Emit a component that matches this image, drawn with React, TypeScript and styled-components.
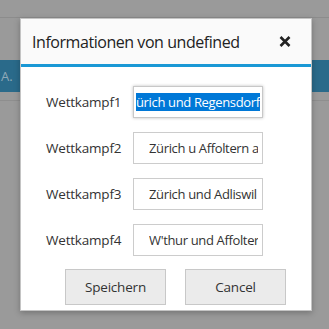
import React from 'react';
import styled, { createGlobalStyle } from 'styled-components';

const GlobalStyle = createGlobalStyle`
  html, body { margin: 0; padding: 0; }
  body {
    width: 329px;
    height: 329px;
    overflow: hidden;
    background: #999999;
    font-family: 'Open Sans', 'Noto Sans', sans-serif;
  }
`;

// Page behind the overlay (already dimmed)
const Page = styled.div`
  position: relative;
  width: 329px;
  height: 329px;
  background: #9a9a9a;
`;

const TopBar = styled.div`
  height: 17px;
  border-bottom: 1px solid #8c8c8c;
`;

const Band = styled.div`
  margin-top: 42px;
  height: 32px;
  background: #2a6a8a;
  color: #8fa9b8;
  font-size: 13px;
  line-height: 32px;
  padding-left: 1px;
`;

const Rule = styled.div`
  margin-top: 8px;
  height: 1px;
  background: #8e8e8e;
`;

const Dialog = styled.div`
  position: absolute;
  left: 20px;
  top: 18px;
  width: 292px;
  height: 293px;
  box-sizing: border-box;
  background: #ffffff;
  border: 1px solid #c4c4c4;
  box-shadow: 0 2px 6px rgba(0, 0, 0, 0.25);
  display: flex;
  flex-direction: column;
`;

const Header = styled.div`
  height: 45px;
  background: #fafafa;
  border-bottom: 3px solid #1a98d5;
  display: flex;
  align-items: center;
  justify-content: space-between;
  padding: 0 20px 0 11px;
`;

const Title = styled.h1`
  margin: 0;
  font-size: 16px;
  letter-spacing: -0.45px;
  font-weight: 400;
  color: #222;
`;

const Close = styled.button`
  border: 0;
  background: none;
  padding: 0;
  display: flex;
  cursor: pointer;
`;

const Body = styled.div`
  padding: 19px 0 0 25px;
  display: flex;
  flex-direction: column;
  gap: 14px;
`;

const Row = styled.div`
  display: flex;
  align-items: center;
  gap: 14px;
`;

const Label = styled.label`
  width: 73px;
  font-size: 13.5px;
  letter-spacing: -0.2px;
  color: #333;
  white-space: nowrap;
`;

const fieldBase = `
  box-sizing: border-box;
  width: 130px;
  height: 32px;
  border: 1px solid #cccccc;
  background: #fff;
  font-family: 'Open Sans', 'Noto Sans', sans-serif;
  font-size: 13px;
  letter-spacing: -0.35px;
  color: #333;
`;

const Field = styled.input`
  ${fieldBase}
  padding: 0 4px 0 15px;
  outline: none;
`;

const FocusField = styled.div`
  ${fieldBase}
  border-color: #c8c8c8;
  box-shadow: 0 0 3px rgba(0, 0, 0, 0.25);
  padding: 0 3px 0 2px;
  display: flex;
  align-items: center;
  overflow: hidden;
  white-space: nowrap;
`;

const Selected = styled.span`
  background: #0078d7;
  color: #fff;
  line-height: 18px;
`;

const Actions = styled.div`
  display: flex;
  gap: 19px;
  padding-left: 19px;
  margin-top: -1px;
`;

const Button = styled.button`
  width: 101px;
  height: 36px;
  box-sizing: border-box;
  background: #ebebeb;
  border: 1px solid #c8c8c8;
  font-family: 'Open Sans', 'Noto Sans', sans-serif;
  font-size: 13.5px;
  letter-spacing: -0.2px;
  color: #333;
  cursor: pointer;
`;

const fields = [
  { label: 'Wettkampf2', value: 'Zürich u Affoltern a. A.' },
  { label: 'Wettkampf3', value: 'Zürich und Adliswil' },
  { label: 'Wettkampf4', value: "W'thur und Affoltern" },
];

export default function App() {
  return (
    <>
      <GlobalStyle />
      <Page>
        <TopBar />
        <Band>A.</Band>
        <Rule />
        <Dialog>
          <Header>
            <Title>Informationen von undefined</Title>
            <Close aria-label="close">
              <svg width="12" height="11" viewBox="0 0 12 11">
                <path d="M1.5 1 L10.5 10 M10.5 1 L1.5 10" stroke="#222" strokeWidth="2.6" />
              </svg>
            </Close>
          </Header>
          <Body>
            <Row>
              <Label>Wettkampf1</Label>
              <FocusField>
                <Selected>ürich und Regensdorf</Selected>
              </FocusField>
            </Row>
            {fields.map((f) => (
              <Row key={f.label}>
                <Label>{f.label}</Label>
                <Field readOnly value={f.value} />
              </Row>
            ))}
            <Actions>
              <Button>Speichern</Button>
              <Button>Cancel</Button>
            </Actions>
          </Body>
        </Dialog>
      </Page>
    </>
  );
}
